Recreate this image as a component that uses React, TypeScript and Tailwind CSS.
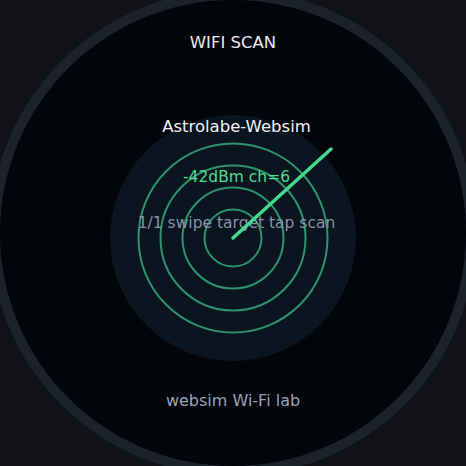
const RINGS = [28.5, 50.5, 72.5, 94.5]

export default function App() {
  return (
    <div
      className="w-[466px] h-[466px] bg-[#101217] flex items-center justify-center overflow-hidden"
      style={{ fontFamily: '"DejaVu Sans", sans-serif' }}
    >
      <div className="w-[466px] h-[466px] shrink-0 rounded-full bg-[#02050a] shadow-[0_0_0_10px_#1c222b] flex flex-col items-center pt-[32px]">
        <div className="h-[22px] leading-[22px] text-[16.5px] text-[#e6eaf0]">WIFI SCAN</div>

        {/* radar */}
        <div className="relative w-[246px] h-[246px] mt-[61px]">
          <svg width="246" height="246" viewBox="0 0 246 246" className="block">
            <circle cx="123" cy="123" r="123" fill="#0a1520" />
            {RINGS.map((r) => (
              <circle key={r} cx="123" cy="123" r={r} fill="none" stroke="#2e936f" strokeWidth="2" />
            ))}
          </svg>

          <div className="absolute inset-0 pl-[7px] flex flex-col items-center whitespace-nowrap">
            <div className="mt-[1px] h-[22px] leading-[22px] text-[16.5px] text-[#eef1f5]">Astrolabe-Websim</div>
            <div className="mt-[28px] h-[22px] leading-[22px] text-[15.5px] text-[#4ade90]">-42dBm ch=6</div>
            <div className="mt-[24px] h-[22px] leading-[22px] text-[15.5px] text-[#8793a5]">1/1 swipe target tap scan</div>
          </div>

          <svg width="246" height="246" viewBox="0 0 246 246" className="absolute inset-0">
            <line x1="123" y1="123" x2="221" y2="34" stroke="#45d98e" strokeWidth="3.5" strokeLinecap="round" />
          </svg>
        </div>

        <div className="mt-[29px] h-[22px] leading-[22px] text-[16px] text-[#95a3b6]">websim Wi-Fi lab</div>
      </div>
    </div>
  )
}
